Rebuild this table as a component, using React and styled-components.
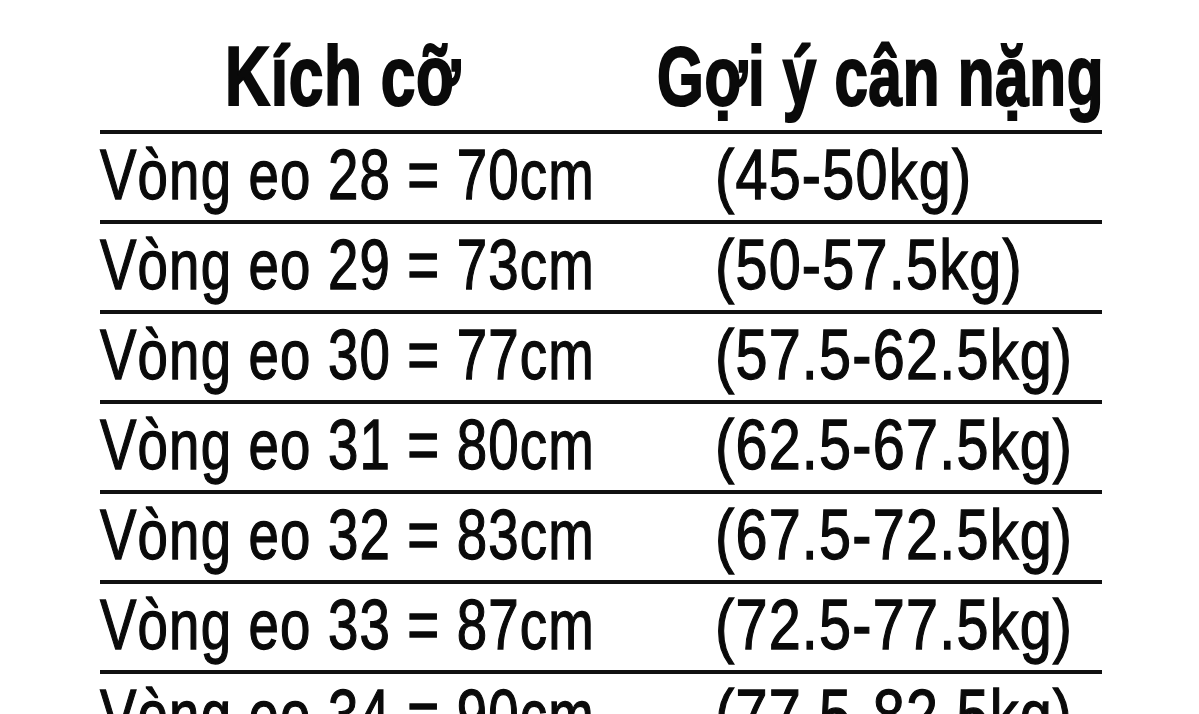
import React from "react";
import styled, { createGlobalStyle } from "styled-components";

const Global = createGlobalStyle`
  html, body { margin: 0; padding: 0; background: #ffffff; }
  body { width: 1199px; height: 714px; overflow: hidden; }
`;

const Page = styled.div`
  width: 1199px;
  height: 714px;
  overflow: hidden;
  background: #ffffff;
  padding-left: 100px;
  box-sizing: border-box;
  font-family: "Liberation Sans", Arial, sans-serif;
  color: #0a0a0a;
`;

const Table = styled.div`
  width: 1002px;
  display: flex;
  flex-direction: column;
`;

const HeaderRow = styled.div`
  display: grid;
  grid-template-columns: 557px 1fr;
  height: 130px;
  box-sizing: border-box;
  padding-top: 26px;
`;

const HeaderCell = styled.div`
  padding-left: ${(p) => p.$indent}px;
  white-space: nowrap;
`;

const HeaderText = styled.span`
  display: inline-block;
  font-weight: 700;
  font-size: 84px;
  line-height: 100px;
  letter-spacing: 1px;
  -webkit-text-stroke: 2.2px #0a0a0a;
  transform: scaleX(${(p) => p.$scale});
  transform-origin: left center;
`;

const Row = styled.div`
  display: grid;
  grid-template-columns: 615px 1fr;
  height: 90px;
  box-sizing: border-box;
  border-top: 4px solid #111;
`;

const Cell = styled.div`
  white-space: nowrap;
`;

const CellText = styled.span`
  display: inline-block;
  font-size: 70px;
  line-height: 82px;
  letter-spacing: 1.5px;
  -webkit-text-stroke: 1.3px #0a0a0a;
  transform: scaleX(${(p) => p.$scale});
  transform-origin: left center;
`;

const rows = [
  ["Vòng eo 28 = 70cm", "(45-50kg)"],
  ["Vòng eo 29 = 73cm", "(50-57.5kg)"],
  ["Vòng eo 30 = 77cm", "(57.5-62.5kg)"],
  ["Vòng eo 31 = 80cm", "(62.5-67.5kg)"],
  ["Vòng eo 32 = 83cm", "(67.5-72.5kg)"],
  ["Vòng eo 33 = 87cm", "(72.5-77.5kg)"],
  ["Vòng eo 34 = 90cm", "(77.5-82.5kg)"],
];

export default function App() {
  return (
    <>
      <Global />
      <Page>
        <Table>
          <HeaderRow>
            <HeaderCell $indent={125}>
              <HeaderText $scale={0.74}>Kích cỡ</HeaderText>
            </HeaderCell>
            <HeaderCell $indent={0}>
              <HeaderText $scale={0.716}>Gợi ý cân nặng</HeaderText>
            </HeaderCell>
          </HeaderRow>
          {rows.map(([a, b]) => (
            <Row key={a}>
              <Cell>
                <CellText $scale={0.78}>{a}</CellText>
              </Cell>
              <Cell>
                <CellText $scale={0.822}>{b}</CellText>
              </Cell>
            </Row>
          ))}
        </Table>
      </Page>
    </>
  );
}
